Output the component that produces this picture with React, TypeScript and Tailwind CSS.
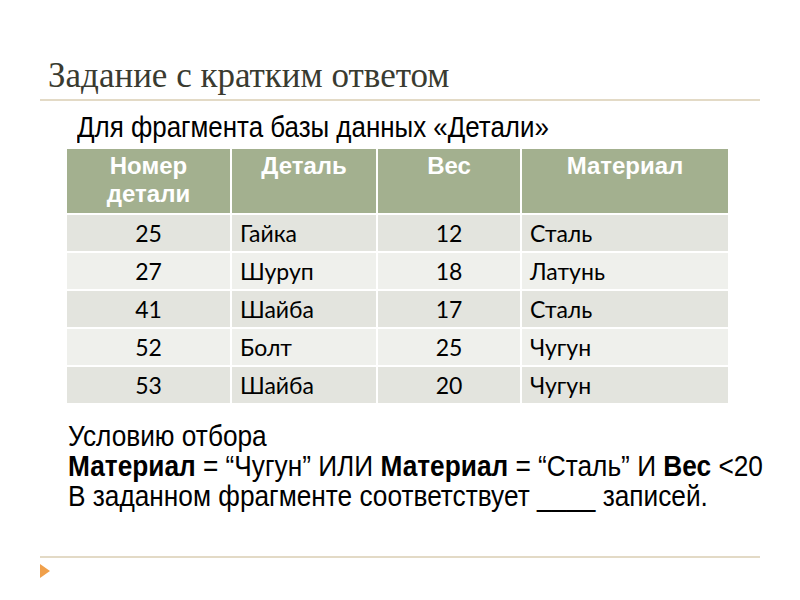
import React from "react";

const rows = [
  ["25", "Гайка", "12", "Сталь"],
  ["27", "Шуруп", "18", "Латунь"],
  ["41", "Шайба", "17", "Сталь"],
  ["52", "Болт", "25", "Чугун"],
  ["53", "Шайба", "20", "Чугун"],
];

const narrow = { fontFamily: '"Liberation Sans", Arial, sans-serif' };

export default function App() {
  return (
    <div className="w-[800px] h-[600px] bg-white flex flex-col overflow-hidden">
      <div
        className="pl-[48px] pt-[58px] h-[99px] text-[35px] leading-[36px] text-[#3a3b30]"
        style={{ fontFamily: '"Liberation Serif", "Times New Roman", serif' }}
      >
        Задание с кратким ответом
      </div>
      <div className="mx-[40px] h-[2px] bg-[#e3dac6]" />
      <div className="pl-[77px] pt-[11px] h-[48px]">
        <div
          className="text-[30px] leading-[30px] text-black whitespace-nowrap scale-x-[0.864] origin-left"
          style={narrow}
        >
          Для фрагмента базы данных «Детали»
        </div>
      </div>
      <div className="ml-[67px] w-[661px] grid grid-cols-[163px_144px_142px_206px] gap-[2px] bg-white">
        {["Номер детали", "Деталь", "Вес", "Материал"].map((h, i) => (
          <div
            key={i}
            className="h-[64px] bg-[#a3b08f] text-white font-bold text-[24px] leading-[28px] text-center pt-[3px]"
            style={{ fontFamily: '"Liberation Sans", Arial, sans-serif' }}
          >
            {i === 0 ? (
              <>
                Номер
                <br />
                детали
              </>
            ) : (
              h
            )}
          </div>
        ))}
        {rows.map((r, ri) => {
          const bg = ri % 2 === 0 ? "bg-[#e3e4de]" : "bg-[#eff0ec]";
          return r.map((c, ci) => (
            <div
              key={`${ri}-${ci}`}
              className={`h-[36px] ${bg} flex items-center text-[23px] text-black ${
                ci === 0 || ci === 2 ? "justify-center" : "justify-start pl-[8px]"
              }`}
              style={{ fontFamily: "Lato, 'Open Sans', sans-serif" }}
            >
              {c}
            </div>
          ));
        })}
      </div>
      <div className="pl-[68px] pt-[18px]">
        <div
          className="text-[30px] leading-[30px] text-black whitespace-nowrap scale-x-[0.875] origin-left"
          style={narrow}
        >
          <div>Условию отбора</div>
          <div>
            <span className="font-bold">Материал</span> = “Чугун” ИЛИ <span className="font-bold">Материал</span> = “Сталь” И{" "}
            <span className="font-bold">Вес</span> &lt;20
          </div>
          <div>В заданном фрагменте соответствует ____ записей.</div>
        </div>
      </div>
      <div className="mt-auto mb-[42px] mx-[40px] h-[2px] bg-[#e3dac6]" />
      <div className="relative">
        <div className="absolute left-[40px] top-[-36px] w-0 h-0 border-y-[7px] border-y-transparent border-l-[10px] border-l-[#f0a04b]" />
      </div>
    </div>
  );
}
